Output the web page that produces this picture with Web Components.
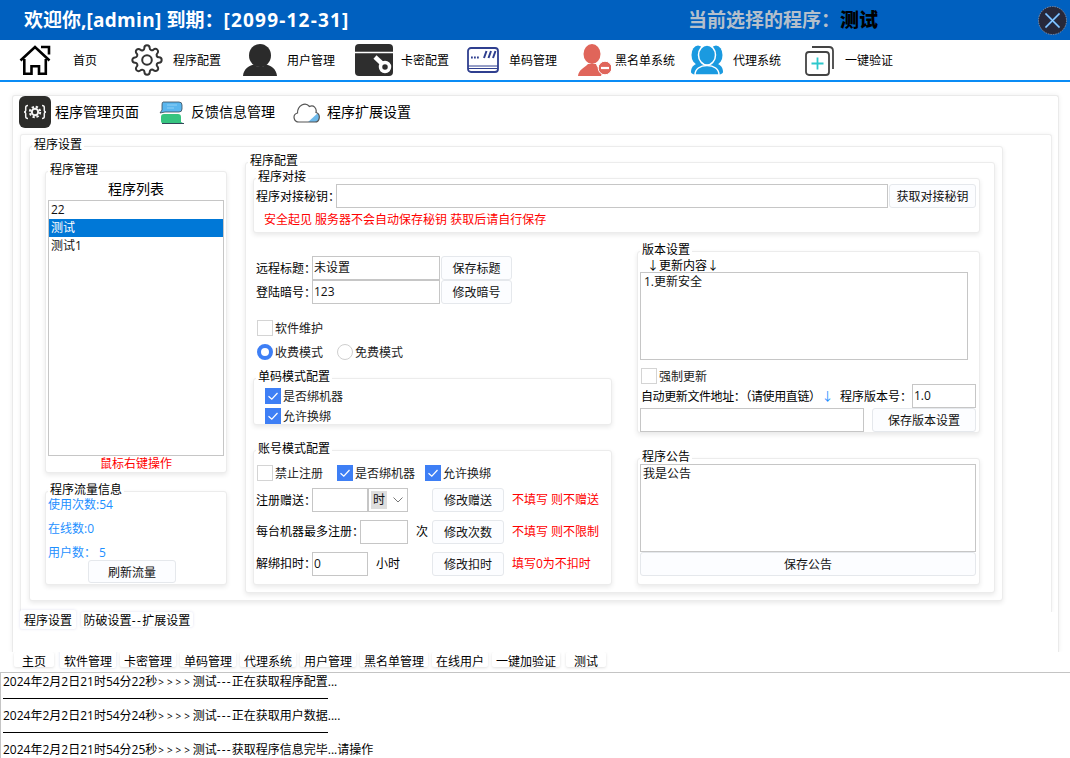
<!DOCTYPE html>
<html lang="zh">
<head>
<meta charset="utf-8">
<title>程序管理</title>
<style>
html,body{margin:0;padding:0;background:#fff}
body{width:1070px;height:758px;overflow:hidden;font:12px/17px "Open Sans","Noto Sans CJK SC",sans-serif;color:#000}
</style>
</head>
<body>
<app-header></app-header>
<app-nav></app-nav>
<program-page></program-page>
<bottom-tabs></bottom-tabs>
<log-panel></log-panel>

<script>
function def(name, css, html){
  customElements.define(name, class extends HTMLElement{
    constructor(){
      super();
      const r=this.attachShadow({mode:'open'});
      const attrs=this;
      r.innerHTML='<style>'+css+'</style>'+(typeof html==='function'?html(attrs):html);
    }
  });
}
const GEAR='M19.4 15a1.65 1.65 0 0 0 .33 1.82l.06.06a2 2 0 0 1 0 2.83 2 2 0 0 1-2.83 0l-.06-.06a1.65 1.65 0 0 0-1.82-.33 1.65 1.65 0 0 0-1 1.51V21a2 2 0 0 1-2 2 2 2 0 0 1-2-2v-.09A1.65 1.65 0 0 0 9 19.4a1.65 1.65 0 0 0-1.82.33l-.06.06a2 2 0 0 1-2.83 0 2 2 0 0 1 0-2.83l.06-.06a1.65 1.65 0 0 0 .33-1.82 1.65 1.65 0 0 0-1.51-1H3a2 2 0 0 1-2-2 2 2 0 0 1 2-2h.09A1.65 1.65 0 0 0 4.6 9a1.65 1.65 0 0 0-.33-1.82l-.06-.06a2 2 0 0 1 0-2.83 2 2 0 0 1 2.83 0l.06.06a1.65 1.65 0 0 0 1.82.33H9a1.65 1.65 0 0 0 1-1.51V3a2 2 0 0 1 2-2 2 2 0 0 1 2 2v.09a1.65 1.65 0 0 0 1 1.51 1.65 1.65 0 0 0 1.82-.33l.06-.06a2 2 0 0 1 2.83 0 2 2 0 0 1 0 2.83l-.06.06a1.65 1.65 0 0 0-.33 1.82V9a1.65 1.65 0 0 0 1.51 1H21a2 2 0 0 1 2 2 2 2 0 0 1-2 2h-.09a1.65 1.65 0 0 0-1.51 1z';

/* ---------- primitives ---------- */
def('x-group',
 `:host{display:block;box-sizing:border-box;position:relative;background:#fff;border:1px solid #ececec;border-radius:3px;box-shadow:0 2px 5px rgba(0,0,0,.09)}
  .legend{position:absolute;left:2px;top:-11px;padding:0 2px;background:#fff;font-size:12px;line-height:17px;white-space:nowrap;height:14px}`,
 el=>`<div class="legend">${el.getAttribute('label')}</div><slot></slot>`);

def('x-btn',
 `:host{display:block;box-sizing:border-box;flex:none;height:24px;border:1px solid #e5e8ec;border-radius:3px;background:#fcfdff;text-align:center;line-height:24px;color:#111;white-space:nowrap}`,
 `<slot></slot>`);

def('x-input',
 `:host{display:block;box-sizing:border-box;flex:none;height:24px;border:1px solid #c6c6c6;background:#fff;padding-left:1px;line-height:22px;color:#111;white-space:nowrap;overflow:hidden}`,
 `<slot></slot>`);

def('x-area',
 `:host{display:block;box-sizing:border-box;flex:none;height:88px;border:1px solid #c6c6c6;background:#fff;padding:0 3px;line-height:17px;color:#111}`,
 `<slot></slot>`);

def('x-check',
 `:host{display:inline-flex;align-items:center;flex:none;gap:2px;height:16px;color:#222;white-space:nowrap}
  span{display:block;line-height:16px;padding-top:2px}
  .b{box-sizing:border-box;width:16px;height:16px;border:1px solid #d4d4d4;background:#fff;flex:none;display:block}
  :host([on]) .b{background:#3e7ff5;border-color:#3e7ff5}`,
 el=>`<svg class="b" viewBox="0 0 14 14">${el.hasAttribute('on')?'<path d="M2.500 7.200 5.800 10.200 11.500 4" fill="none" stroke="#fff" stroke-width="1.200"/>':''}</svg><span><slot></slot></span>`);

def('x-radio',
 `:host{display:inline-flex;align-items:center;flex:none;gap:2px;height:16px;color:#222;white-space:nowrap}
  span{display:block;line-height:16px;padding-top:2px}
  .r{box-sizing:border-box;width:16px;height:16px;padding:0;border-radius:50%;border:1px solid #cfcfcf;background:#fff;flex:none}
  :host([on]) .r{border:4px solid #3e7ff5}`,
 `<span class="r"></span><span><slot></slot></span>`);

def('x-select',
 `:host{display:flex;align-items:center;box-sizing:border-box;flex:none;width:40px;height:24px;border:1px solid #c6c6c6;background:#fff;padding-left:2px}
  .v{width:16px;height:18px;line-height:18px;background:#dedede;text-align:center;color:#111}
  svg{margin-left:6px;display:block}`,
 `<div class="v"><slot></slot></div><svg width="10" height="6" viewBox="0 0 10 6"><path d="M.5.5 5 5 9.500.5" fill="none" stroke="#777" stroke-width="1"/></svg>`);

/* ---------- chrome ---------- */
def('app-header',
 `:host{display:flex;align-items:center;height:40px;background:#0060bf;font-weight:700;font-size:19px;line-height:24px;white-space:nowrap}
  .t{margin-left:24px;width:664px;color:#fff}
  .t i{font-style:normal;letter-spacing:1.200px}
  .t u{text-decoration:none;letter-spacing:.3px}
  .s{color:#b4bfcb}
  .s b{color:#000}
  svg{margin-left:auto;margin-right:3px;display:block}`,
 `<div class="t">欢迎你,<u>[admin]</u> 到期：<i>[2099-12-31]</i></div>
  <div class="s">当前选择的程序：<b>测试</b></div>
  <svg width="29" height="29" viewBox="0 0 29 29"><circle cx="14.500" cy="14.500" r="14" fill="#27283a" stroke="#9aa0b0" stroke-width=".8" stroke-dasharray="1.500 1"/><path d="M7.500 7.500 21.500 21.500M21.500 7.500 7.500 21.500" stroke="#5aa9f2" stroke-width="1.800"/><path d="M7.500 7.500 21.500 21.500M21.500 7.500 7.500 21.500" stroke="#dbe9f7" stroke-width=".5"/></svg>`);

def('nav-item',
 `:host{display:flex;align-items:center;height:40px;flex:none;white-space:nowrap;line-height:17px;color:#000}
  ::slotted(svg){display:block;flex:none}`,
 `<slot name="icon"></slot><slot></slot>`);

def('app-nav',
 `:host{display:flex;box-sizing:border-box;height:42px;background:#fff;border-bottom:2px solid #0a8cf5}
  nav-item span{display:block}`,
 `<nav-item style="margin-left:19px"><svg slot="icon" width="32" height="30" viewBox="0 0 32 30" style="margin-right:22px" fill="none" stroke="#000" stroke-width="2.600"><path d="M1.500 15.500 16 2 30.500 15.500"/><path d="M22 2H30V9.500"/><path d="M5.300 14V28.700H12.500V21.200H20V28.700H26.800V14"/></svg><span>首页</span></nav-item>
  <nav-item style="margin-left:34px"><svg slot="icon" width="32" height="32" viewBox="0 0 24 24" style="margin-right:10px" fill="none" stroke="#333" stroke-width="1.500"><path d="${GEAR}"/><circle cx="12" cy="12" r="3.600"/></svg><span>程序配置</span></nav-item>
  <nav-item style="margin-left:22px"><svg slot="icon" width="34" height="32" viewBox="0 0 34 32" style="margin-right:10px" fill="#2b2b2b"><ellipse cx="17" cy="11.500" rx="11" ry="11.500"/><path d="M0 32C.5 25 6 21.500 11 20.500Q17 25.500 23 20.500C28 21.500 33.500 25 34 32Z"/></svg><span>用户管理</span></nav-item>
  <nav-item style="margin-left:20px"><svg slot="icon" width="38" height="32" viewBox="0 0 38 32" style="margin-right:8px"><rect width="38" height="32" rx="4" fill="#2e2e2e"/><path d="M0 8.500H38" stroke="#fff" stroke-width="1.500"/><path d="M20 13 28 20.500" stroke="#fff" stroke-width="4.500"/><circle cx="30" cy="23" r="4.500" fill="#2e2e2e" stroke="#fff" stroke-width="3.500"/></svg><span>卡密配置</span></nav-item>
  <nav-item style="margin-left:18px"><svg slot="icon" width="32" height="26" viewBox="0 0 32 26" style="margin-right:10px" fill="none" stroke="#2f3f8f"><rect x="1" y="1" width="30" height="24" rx="3" stroke-width="1.800"/><path d="M1 19H31M1 21.500H31" stroke-width="1"/><path d="M4 10.500H13" stroke-width="1.800" stroke-dasharray="1.800 1.200"/><path d="M17 11 19.500 4M21.500 11 24 4M26 11 28.500 4" stroke-width="2"/></svg><span>单码管理</span></nav-item>
  <nav-item style="margin-left:21px"><svg slot="icon" width="33" height="32" viewBox="0 0 33 32" style="margin-right:4px"><ellipse cx="14" cy="10" rx="8.500" ry="10" fill="#e0655a"/><path d="M0 32C.5 26 6 24 10 20H18C19 24 22 25 25 26L23 32Z" fill="#e0655a"/><circle cx="27" cy="24" r="6.800" fill="#e0655a" stroke="#fff" stroke-width="1"/><path d="M23 24H31" stroke="#fff" stroke-width="2.200"/></svg><span>黑名单系统</span></nav-item>
  <nav-item style="margin-left:16px"><svg slot="icon" width="32" height="30" viewBox="0 0 32 30" style="margin-right:10px" fill="#1a9ae0"><ellipse cx="7" cy="10" rx="6.500" ry="9.500"/><ellipse cx="25" cy="10" rx="6.500" ry="9.500"/><path d="M0 27C0 21 4 19 8 18H24C28 19 32 21 32 27 32 29 28 30 25 30H7C4 30 0 29 0 27Z"/><ellipse cx="16" cy="10" rx="8.500" ry="10" stroke="#fff" stroke-width="1.500"/><path d="M4 30C4 24 9 20.500 16 20.500S28 24 28 30Z" stroke="#fff" stroke-width="1.500"/></svg><span>代理系统</span></nav-item>
  <nav-item style="margin-left:24px"><svg slot="icon" width="29" height="31" viewBox="0 0 29 31" style="margin-right:11px" fill="none"><rect x="1" y="7" width="23" height="23" rx="3" stroke="#444" stroke-width="1.800"/><path d="M7 2H24Q28 2 28 6V24" stroke="#444" stroke-width="1.800"/><path d="M12.500 12.500V24.500M6.500 18.500H18.500" stroke="#2cc8cc" stroke-width="1.800"/></svg><span>一键验证</span></nav-item>`);

def('sub-tabs',
 `:host{display:flex;align-items:center;height:32px;font-size:14px;line-height:20px;white-space:nowrap;color:#000}
  svg{display:block;flex:none}
  span{display:block}`,
 `<svg width="32" height="32" viewBox="0 0 32 32" style="margin-left:6px;margin-right:4px"><rect width="32" height="32" rx="6" fill="#2c2c2a"/><g fill="none" stroke="#f4f4f4"><circle cx="16" cy="16" r="3.200" stroke-width="2"/><circle cx="16" cy="16" r="5.200" stroke-width="2" stroke-dasharray="2.300 1.800"/><path d="M9 9.500Q6.700 9.500 6.700 11.500V14.500Q6.700 16 5 16 6.700 16 6.700 17.500V20.500Q6.700 22.500 9 22.500M23 9.500Q25.300 9.500 25.300 11.500V14.500Q25.300 16 27 16 25.300 16 25.300 17.500V20.500Q25.300 22.500 23 22.500" stroke-width="1.500"/></g></svg><span>程序管理页面</span>
  <svg width="25" height="23" viewBox="0 0 25 23" style="margin-left:20px;margin-right:7px"><path d="M4 1H20Q23 1 23 4V8Q23 11 20 11H6L1 12 3 9V4Q3 1 4 1Z" fill="#5ab6ee" stroke="#3b4a55" stroke-width=".8"/><path d="M8 4H18M8 7H15" stroke="#8fd0f5" stroke-width="1"/><path d="M5 13H19Q22 13 22 16V21L25 22.500H5Q2 22.500 2 20V16Q2 13 5 13Z" fill="#36c47f"/><path d="M3 22.500H25" stroke="#33475a" stroke-width="1"/></svg><span>反馈信息管理</span>
  <svg width="28" height="22" viewBox="0 0 28 22" style="margin-left:17px;margin-right:7px"><defs><clipPath id="cl"><path d="M7 21C1.500 21 0 13.500 5.500 12 5.500 5 13 0 17.500 5.500 21.500 3.500 25 7 24 11.500 29 13 28 21 23 21Z"/></clipPath></defs><path d="M7 21C1.500 21 0 13.500 5.500 12 5.500 5 13 0 17.500 5.500 21.500 3.500 25 7 24 11.500 29 13 28 21 23 21Z" fill="#fff"/><path d="M28 10V22H15Z" fill="#6db9ea" clip-path="url(#cl)"/><path d="M7 21C1.500 21 0 13.500 5.500 12 5.500 5 13 0 17.500 5.500 21.500 3.500 25 7 24 11.500 29 13 28 21 23 21Z" fill="none" stroke="#555" stroke-width="1.200"/></svg><span>程序扩展设置</span>`);

def('bottom-tabs',
 `:host{display:flex;height:20px;padding-left:14px;gap:4px;box-sizing:border-box;line-height:17px}
  div{box-sizing:border-box;height:15px;text-align:center;background:#fff;box-shadow:0 1px 3px rgba(0,0,0,.12);border-radius:2px;line-height:19px;width:56px;white-space:nowrap}
  .sel{height:18px;margin-top:-2px;line-height:23px;box-shadow:0 0 3px rgba(60,90,170,.22)}`,
 `<div style="width:40px;margin-right:2px">主页</div><div class="sel">软件管理</div><div>卡密管理</div><div>单码管理</div><div>代理系统</div><div>用户管理</div><div style="width:68px">黑名单管理</div><div>在线用户</div><div style="width:68px;margin-right:2px">一键加验证</div><div style="width:40px">测试</div>`);

def('log-panel',
 `:host{display:block;box-sizing:border-box;height:86px;border-top:1px solid #c4c4c4;border-left:1px solid #c4c4c4;padding-left:2px;line-height:17px;white-space:nowrap;overflow:hidden;background:#fff}
  p{margin:0;height:17px}
  hr{margin:8px 0 8px 0;height:1px;border:0;background:#000;width:325px}
  .g{font-size:10px;letter-spacing:2.900px;margin-left:1px}
  .d{letter-spacing:1.100px}`,
 `<p>2024年2月2日21时54分22秒<span class="g">&gt;&gt;&gt;&gt;</span>测试<span class="d">---</span>正在获取程序配置...</p><hr>
  <p>2024年2月2日21时54分24秒<span class="g">&gt;&gt;&gt;&gt;</span>测试<span class="d">---</span>正在获取用户数据....</p><hr>
  <p>2024年2月2日21时54分25秒<span class="g">&gt;&gt;&gt;&gt;</span>测试<span class="d">---</span>获取程序信息完毕...请操作</p>`);

/* ---------- main page ---------- */
def('program-page',
 `:host{display:block;box-sizing:border-box;width:1047px;height:557px;margin:13px 0 0 12px;border:1px solid #eaeaea;border-bottom:0;border-radius:3px 3px 0 0;box-shadow:0 0 5px rgba(0,0,0,.07);background:#fff;clip-path:inset(-6px -6px 0 -6px)}
  .panel{box-sizing:border-box;width:1032px;height:478px;margin:6px 0 0 7px;border:1px solid #ededed;border-bottom:0;border-radius:3px 3px 0 0;box-shadow:0 0 4px rgba(0,0,0,.06);padding:11px 0 0 8px;background:#fff;clip-path:inset(-6px -6px 0 -6px)}
  .row{display:flex;align-items:center}
  .red{color:#f00}
  .blue{color:#1e90ff}
  .up{margin-bottom:2px}
  #g1{width:974px;height:455px;display:flex;align-items:flex-start}
  #left{margin:24px 0 0 15px;width:182px;flex:none}
  #cfg{margin:15px 0 0 18px;width:750px;height:431px}
  #mgr{height:302px}
  .title{font-size:14px;line-height:18px;text-align:center;margin-top:8px}
  .list{box-sizing:border-box;margin:2px 0 0 2px;width:176px;height:256px;border:1px solid #c6c6c6;background:#fff}
  .list div{height:18px;line-height:18px;padding-left:2px;color:#111}
  .list .sel{background:#0078d7;color:#fff}
  .hint{text-align:center;line-height:16px;color:#f00}
  #flow{height:94px;margin-top:18px;padding-top:1px}
  #flow p{margin:0 0 0 2px;height:24px;line-height:24px;color:#1e90ff}
  #flow x-btn{margin:-5px 0 0 42px;width:88px;height:23px;line-height:23px}
  #conn{margin:15px 0 0 7px;width:727px;height:55px}
  #conn .row{margin:5px 0 0 2px}
  #conn .red{margin:3px 0 0 10px}
  #cols{display:flex;align-items:flex-start;margin-left:7px}
  #c1{width:359px;flex:none;margin-top:23px}
  #c2{width:343px;flex:none;margin:18px 0 0 25px}
  .f{display:block;flex:none;white-space:nowrap}
  #single{height:47px;margin-top:18px}
  #single x-check{display:flex;margin:4px 0 0 11px}
  #single x-check:first-of-type{margin-top:9px}
  #acct{height:135px;margin-top:25px}
  #acct .row{margin:8px 0 0 2px;height:24px}
  #acct .row.c{margin:14px 0 0 3px;height:16px}
  #acct .row.c + .row{margin-top:7px}
  #ver{height:182px}
  #ver .u{margin:6px 0 0 12px;line-height:14px;height:14px;white-space:nowrap}
  .ar{font-family:"Noto Sans CJK SC",sans-serif;margin-left:-3px;letter-spacing:-3px}
  #notice{height:127px;margin-top:25px;padding:5px 0 0 2px}
  #notice x-btn{width:336px}
  .tight{letter-spacing:-.4px}
 `,
 `<sub-tabs></sub-tabs>
 <div class="panel">
  <x-group id="g1" label="程序设置">
    <div id="left">
      <x-group id="mgr" label="程序管理">
        <div class="title">程序列表</div>
        <div class="list"><div>22</div><div class="sel">测试</div><div>测试1</div></div>
        <div class="hint">鼠标右键操作</div>
      </x-group>
      <x-group id="flow" label="程序流量信息">
        <p>使用次数:54</p><p>在线数:0</p><p>用户数： 5</p>
        <x-btn>刷新流量</x-btn>
      </x-group>
    </div>
    <x-group id="cfg" label="程序配置">
      <x-group id="conn" label="程序对接">
        <div class="row"><span class="f" style="width:80px">程序对接秘钥：</span><x-input style="width:552px"></x-input><x-btn style="width:87px;margin-left:1px">获取对接秘钥</x-btn></div>
        <div class="red">安全起见 服务器不会自动保存秘钥 获取后请自行保存</div>
      </x-group>
      <div id="cols">
        <div id="c1">
          <div class="row" style="margin-left:3px"><span class="f" style="width:56px">远程标题：</span><x-input style="width:128px">未设置</x-input><x-btn style="width:71px;margin-left:1px">保存标题</x-btn></div>
          <div class="row" style="margin-left:3px"><span class="f" style="width:56px">登陆暗号：</span><x-input style="width:128px">123</x-input><x-btn style="width:71px;margin-left:1px">修改暗号</x-btn></div>
          <div class="row" style="margin:16px 0 0 4px"><x-check>软件维护</x-check></div>
          <div class="row" style="margin:8px 0 0 4px"><x-radio on>收费模式</x-radio><x-radio style="margin-left:14px">免费模式</x-radio></div>
          <x-group id="single" label="单码模式配置">
            <x-check on>是否绑机器</x-check>
            <x-check on>允许换绑</x-check>
          </x-group>
          <x-group id="acct" label="账号模式配置">
            <div class="row c"><x-check>禁止注册</x-check><x-check on style="margin-left:14px">是否绑机器</x-check><x-check on style="margin-left:10px">允许换绑</x-check></div>
            <div class="row"><span class="f" style="width:56px">注册赠送：</span><x-input style="width:56px"></x-input><x-select>时</x-select><x-btn style="width:72px;margin-left:24px">修改赠送</x-btn><span class="f red up" style="margin-left:8px">不填写 则不赠送</span></div>
            <div class="row"><span class="f up" style="width:104px">每台机器最多注册：</span><x-input style="width:48px"></x-input><span class="f up" style="width:16px;margin-left:8px">次</span><x-btn style="width:72px">修改次数</x-btn><span class="f red up" style="margin-left:8px">不填写 则不限制</span></div>
            <div class="row"><span class="f up" style="width:56px">解绑扣时：</span><x-input style="width:56px">0</x-input><span class="f up" style="width:56px;margin-left:8px">小时</span><x-btn style="width:72px">修改扣时</x-btn><span class="f red up" style="margin-left:8px">填写0为不扣时</span></div>
          </x-group>
        </div>
        <div id="c2">
          <x-group id="ver" label="版本设置">
            <div class="u"><span class="ar">↓</span><span style="margin-left:3px">更新内容</span><span class="ar" style="margin-left:0">↓</span></div>
            <x-area style="width:328px;margin-left:2px">1.更新安全</x-area>
            <div class="row" style="margin:8px 0 0 3px"><x-check>强制更新</x-check></div>
            <div class="row" style="margin-left:3px"><span class="f tight" style="width:174px">自动更新文件地址：（请使用直链）</span><span class="f blue" style="width:25px;text-align:center">↓</span><span class="f" style="width:72px">程序版本号：</span><x-input style="width:64px">1.0</x-input></div>
            <div class="row" style="margin-left:2px"><x-input style="width:224px"></x-input><x-btn style="width:104px;margin-left:8px">保存版本设置</x-btn></div>
          </x-group>
          <x-group id="notice" label="程序公告">
            <x-area style="width:336px;padding:0 2px">我是公告</x-area>
            <x-btn>保存公告</x-btn>
          </x-group>
        </div>
      </div>
    </x-group>
  </x-group>
 </div>
 <page-tabs></page-tabs>`);

def('page-tabs',
 `:host{display:flex;margin:-2px 0 0 7px;align-items:flex-start;position:relative;line-height:19px;white-space:nowrap}
  div{background:#fff;text-align:center;box-shadow:0 0 3px rgba(70,70,170,.16);border-radius:2px}
  .a{width:56px;height:19px;line-height:22px}
  .b{width:112px;height:15px;line-height:18px;margin:2px 0 0 5px}
  .b i{font-style:normal;letter-spacing:1.500px}`,
 `<div class="a">程序设置</div><div class="b">防破设置<i>--</i>扩展设置</div>`);
</script>
</body>
</html>
